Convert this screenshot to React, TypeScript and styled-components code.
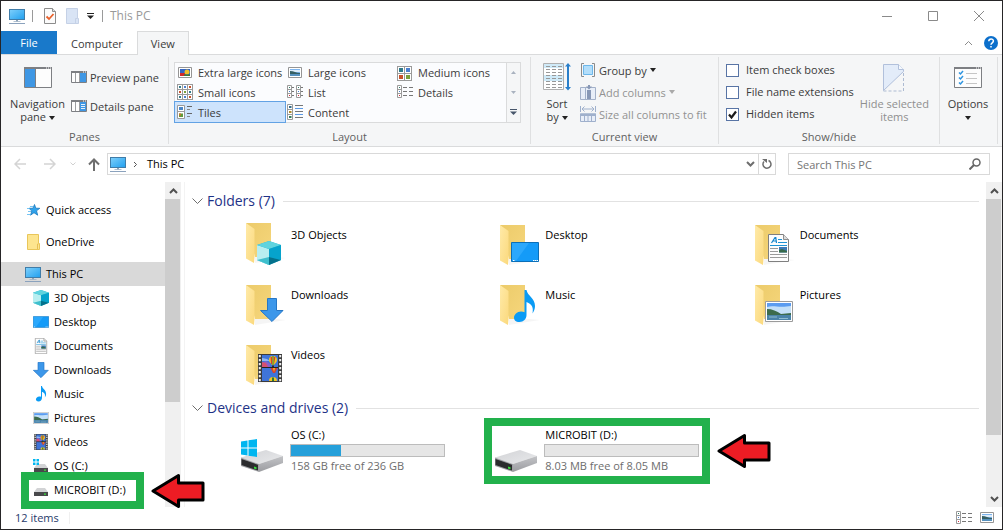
import React from "react";
import styled, { createGlobalStyle, css } from "styled-components";

const GlobalStyle = createGlobalStyle`
  *, *::before, *::after { box-sizing: border-box; }
  body { margin: 0; background: #fff; }
  body, button, input { font-family: "Open Sans", "Noto Sans", sans-serif; font-size: 11px; }
  button { border: 0; padding: 0; margin: 0; background: none; color: inherit; }
  svg { display: block; flex: none; }
  ul { list-style: none; margin: 0; padding: 0; }
  a { color: inherit; text-decoration: none; }
`;

/* ---------- window frame ---------- */

const Window = styled.div`
  display: flex;
  flex-direction: column;
  min-height: 100vh;
  border: 1px solid #262527;
  background: #fff;
  color: #000;
  line-height: 18px;
`;

const TitleBar = styled.header`
  display: flex;
  align-items: center;
  height: 30px;
  padding-left: 8px;
`;

const QuickTools = styled.div`
  display: flex;
  align-items: center;
  flex: 1;
`;

const Separator = styled.span<{ $gap: string }>`
  width: 1px;
  height: 12px;
  margin: ${(p) => p.$gap};
  background: #9a9a9a;
`;

const ToolButton = styled.button<{ $gap?: number }>`
  display: flex;
  margin-left: ${(p) => p.$gap ?? 0}px;
`;

const Title = styled.h1`
  margin: 0;
  font-size: 12px;
  font-weight: 400;
  color: #999;
`;

const WindowButton = styled.button`
  display: grid;
  place-items: center;
  width: 46px;
  height: 29px;
  color: #8a8a8a;
`;

/* ---------- tabs ---------- */

const TabBar = styled.nav`
  display: flex;
  height: 24px;
  border-bottom: 1px solid #dadbdc;
`;

const Tab = styled.button<{ $kind?: "file" | "active" }>`
  height: 24px;
  padding: 0 13px;
  border: 1px solid transparent;
  border-bottom: 0;
  color: #3b3b3b;
  ${(p) =>
    p.$kind === "file" &&
    css`
      width: 56px;
      height: 23px;
      border: 0;
      background: #1979ca;
      color: #fff;
    `}
  ${(p) =>
    p.$kind === "active" &&
    css`
      border-color: #dadbdc;
      background: #f5f6f7;
    `}
`;

const TabTools = styled.div`
  display: flex;
  align-items: center;
  gap: 11px;
  margin-left: auto;
  padding-right: 4px;
`;

/* ---------- ribbon ---------- */

const Ribbon = styled.section`
  display: flex;
  padding: 2px 0;
  border-bottom: 1px solid #dadbdc;
  background: #f5f6f7;
  color: #3b3b3b;
`;

const Group = styled.div<{ $width: number }>`
  display: flex;
  flex-direction: column;
  width: ${(p) => p.$width}px;
  height: 87px;
  border-right: 1px solid #dfe0e1;
`;

const GroupBody = styled.div`
  display: flex;
  flex: 1;
  padding: 2px 4px 0 5px;
`;

const GroupLabel = styled.div`
  line-height: 14px;
  text-align: center;
  color: #5f5f5f;
`;

const BigButton = styled.button<{ $width: number; $pad: number; $off?: boolean }>`
  display: flex;
  flex-direction: column;
  align-items: center;
  justify-content: space-between;
  width: ${(p) => p.$width}px;
  height: 64px;
  padding-top: ${(p) => p.$pad}px;
  line-height: 13px;
  color: ${(p) => (p.$off ? "#8f8f8f" : "inherit")};
`;

const BigText = styled.span`
  display: block;
  min-height: 26px;
  white-space: nowrap;
`;

const Stack = styled.div<{ $gap?: number; $top?: number }>`
  display: flex;
  flex-direction: column;
  gap: ${(p) => p.$gap ?? 0}px;
  padding-top: ${(p) => p.$top ?? 0}px;
`;

const SmallButton = styled.button<{ $off?: boolean }>`
  display: flex;
  align-items: center;
  gap: 3px;
  height: 22px;
  padding: 0 2px;
  white-space: nowrap;
  color: ${(p) => (p.$off ? "#929292" : "inherit")};
`;

const Gallery = styled.div`
  display: flex;
  width: 347px;
  height: 61px;
  margin-top: 3px;
  border: 1px solid #dadbdc;
  background: #fbfcfe;
`;

const GalleryGrid = styled.div`
  display: grid;
  grid-template-columns: 110px 110px 1fr;
  grid-template-rows: 19px 20px 20px;
  flex: 1;
`;

const GalleryItem = styled.button<{ $selected?: boolean }>`
  display: flex;
  align-items: center;
  gap: 5px;
  padding-left: 2px;
  white-space: nowrap;
  ${(p) =>
    p.$selected &&
    css`
      background: #cde3fc;
      outline: 1px solid #62a2e4;
      outline-offset: 0;
    `}
`;

const GallerySpin = styled.div`
  display: grid;
  grid-template-rows: 19px 20px 20px;
  width: 14px;
  border-left: 1px solid #dadbdc;
  background: #f5f6f7;
`;

const SpinButton = styled.button`
  display: grid;
  place-items: center;
`;

const CheckRow = styled.label`
  display: flex;
  align-items: center;
  gap: 7px;
  height: 22px;
  padding-left: 2px;
  white-space: nowrap;
`;

const CheckHolder = styled.span`
  position: relative;
  display: flex;
  svg { position: absolute; left: 0; top: 0; pointer-events: none; }
  input:not(:checked) + svg { display: none; }
`;

const Check = styled.input`
  appearance: none;
  width: 13px;
  height: 13px;
  margin: 0;
  border: 1px solid #5874a5;
  background: #fff;
`;

/* ---------- address bar ---------- */

const AddressBar = styled.div`
  display: flex;
  align-items: center;
  padding: 6px 12px 7px 13px;
`;

const NavButtons = styled.div`
  display: flex;
  align-items: center;
  width: 93px;
`;

const AddressBox = styled.div`
  display: flex;
  align-items: center;
  flex: 1;
  height: 22px;
  padding-left: 2px;
  border: 1px solid #d9d9d9;
`;

const Crumb = styled.a`
  flex: 1;
  padding-left: 9px;
`;

const AddressButton = styled.button<{ $divided?: boolean }>`
  display: grid;
  place-items: center;
  width: ${(p) => (p.$divided ? 17 : 15)}px;
  height: 20px;
  border-left: ${(p) => (p.$divided ? "1px solid #d9d9d9" : "0")};
`;

const SearchBox = styled.label`
  display: flex;
  align-items: center;
  width: 202px;
  height: 22px;
  margin-left: 12px;
  padding: 0 8px;
  border: 1px solid #d9d9d9;
`;

const SearchInput = styled.input`
  flex: 1;
  min-width: 0;
  height: 20px;
  padding: 0;
  border: 0;
  outline: 0;
  &::placeholder { color: #757575; opacity: 1; }
`;

/* ---------- body ---------- */

const Body = styled.div`
  display: flex;
  flex: 1;
`;

const Sidebar = styled.nav`
  width: 164px;
  padding: 16px 0 4px;
`;

const NavItem = styled.li<{ $level: number; $selected?: boolean }>`
  position: relative;
  margin-bottom: ${(p) => (p.$level === 0 && !p.$selected ? 8 : 0)}px;
  padding-left: ${(p) => (p.$level ? 32 : 24)}px;
  background: ${(p) => (p.$selected ? "#d9d9d9" : "transparent")};
`;

const NavLink = styled.a`
  display: flex;
  align-items: center;
  gap: 5px;
  height: 24px;
  white-space: nowrap;
`;

const ScrollTrack = styled.div`
  display: flex;
  flex-direction: column;
  width: 16px;
  background: #f0f0f0;
`;

const ScrollButton = styled.button`
  display: grid;
  place-items: center;
  height: 17px;
`;

const ScrollThumb = styled.div<{ $share: number }>`
  flex: ${(p) => p.$share};
  margin-right: 1px;
  background: #cdcdcd;
`;

const ScrollRest = styled.div<{ $share: number }>`
  flex: ${(p) => p.$share};
`;

const Main = styled.main`
  flex: 1;
  min-width: 0;
  margin-left: 3px;
  padding: 8px 0 0 7px;
  border-left: 1px solid #f3f3f3;
`;

const SectionHead = styled.h2`
  display: flex;
  align-items: center;
  gap: 4px;
  height: 22px;
  margin: 0 7px 0 0;
  font-size: 14px;
  font-weight: 400;
  color: #1e3287;
  white-space: nowrap;
  &::after {
    content: "";
    flex: 1;
    height: 1px;
    margin-left: 4px;
    background: #e2e2e2;
  }
`;

const Tiles = styled.ul`
  display: grid;
  grid-template-columns: repeat(auto-fill, minmax(240px, 1fr));
  grid-auto-rows: 60px;
  column-gap: 14px;
  margin: 3px 0 2px 45px;
`;

const Tile = styled.li`
  position: relative;
  display: flex;
  gap: 2px;
  padding: 6px 0 0 3px;
`;

const TileName = styled.a`
  padding: 5px 0 0 1px;
`;

const DriveInfo = styled.div`
  display: flex;
  flex-direction: column;
  width: 155px;
  margin-top: -2px;
`;

const DriveName = styled.a`
  padding-left: 1px;
`;

const Meter = styled.div`
  height: 13px;
  border: 1px solid #bcbcbc;
  background: #e6e6e6;
`;

const MeterFill = styled.div`
  height: 11px;
  background: #26a0da;
`;

const DriveSpace = styled.span`
  padding-left: 1px;
  color: #6d6d6d;
  white-space: nowrap;
`;

/* Tutorial callout: green frame with a red arrow pointing at it */
const Callout = styled.div<{ $left: number; $top: number; $width: number; $height: number }>`
  position: absolute;
  z-index: 2;
  left: ${(p) => p.$left}px;
  top: ${(p) => p.$top}px;
  width: ${(p) => p.$width}px;
  height: ${(p) => p.$height}px;
  border: 8px solid #22b14c;
  pointer-events: none;
  svg { position: absolute; left: 100%; top: 50%; margin: -18px 0 0 15px; }
`;

/* ---------- status bar ---------- */

const StatusBar = styled.footer`
  display: flex;
  align-items: center;
  gap: 7px;
  height: 22px;
  padding: 0 7px 0 14px;
  color: #1f3a6a;
`;

const StatusCount = styled.span`
  padding-right: 10px;
  margin-right: auto;
  border-right: 1px solid #f0f0f0;
  line-height: 12px;
`;

/* ---------- icons ---------- */

const CaretMark = styled.svg`
  display: inline-block;
  vertical-align: middle;
`;

const Caret = ({ color = "#222" }: { color?: string }) => (
  <CaretMark width="6" height="4" viewBox="0 0 6 4">
    <path d="M0 0h6L3 4z" fill={color} />
  </CaretMark>
);

const PcIcon = () => (
  <svg width="16" height="16" viewBox="0 0 16 16">
    <defs>
      <linearGradient id="pc" x1="0" y1="0" x2="1" y2="1">
        <stop offset="0" stopColor="#7fd0fb" /><stop offset="1" stopColor="#1f9fef" />
      </linearGradient>
    </defs>
    <rect x=".5" y="1.5" width="15" height="10" fill="url(#pc)" stroke="#3f7ca8" />
    <path d="M7 12h2v1.5h-2z" fill="#8fa3b8" /><path d="M4.5 13h7v.8h-7z" fill="#9db1c6" />
    <path d="M0 15.5h16" stroke="#8ba2bd" />
  </svg>
);

const PropertiesIcon = () => (
  <svg width="12" height="16" viewBox="0 0 12 16">
    <path d="M.5.5h8l3 3v12H.5z" fill="#fbfbfb" stroke="#8c8c8c" />
    <path d="M8.5.5v3h3" fill="#ddd" stroke="#8c8c8c" />
    <path d="M2.5 8.5l2.500 2.500L9.500 6" fill="none" stroke="#e8612c" strokeWidth="1.8" />
  </svg>
);

const NewFolderIcon = () => (
  <svg width="13" height="16" viewBox="0 0 13 16">
    <path d="M.5.5h11v10h1v5H.5z" fill="#d9e4f5" stroke="#c5d1e6" />
    <path d="M9.5 15v-4.5h2" fill="none" stroke="#c5d1e6" />
  </svg>
);

const FolderIcon = () => (
  <svg width="16" height="16" viewBox="0 0 16 16">
    <path d="M2.5.5h11v9h1v6h-12z" fill="#fde58f" stroke="#e9c65a" />
    <path d="M12.5 15v-5h1" fill="none" stroke="#e6bf55" />
  </svg>
);

const StarIcon = () => (
  <svg width="16" height="16" viewBox="0 0 16 16">
    <path d="M9.5 2.500l1.300 3.700 4 .1-3.300 2.500 1.200 4.400-3.700-2.500-3.500 2.500 1.300-4.200L4 6.300l4-.1z" fill="#2ea3ec" stroke="#1c78bd" strokeWidth=".8" />
    <path d="M5 4.500h3M2 6.500h3M3 9.500h3M2 12.500h4" stroke="#54b5f0" strokeWidth=".8" />
  </svg>
);

const CubeShape = () => (
  <>
    <path d="M12 0l12 4v15l-12 5-12-5V4z" fill="#19b5cf" />
    <path d="M0 4l12 4v16L0 19z" fill="#b8eef0" />
    <path d="M0 4L12 0l12 4-12 4z" fill="#5fd3de" />
    <path d="M12 8l12-4v15l-12-3z" fill="#06a3cc" />
    <path d="M0 19l12-3v8z" fill="#3fbfcd" />
    <path d="M12 16l12 3-12 5z" fill="#04718c" />
  </>
);

const Balloon = ({ x, y }: { x: number; y: number }) => (
  <g transform={`translate(${x} ${y})`}>
    <path d="M-4 0a4 4 0 018 0c0 2-2 3.500-3 5h-2c-1-1.500-3-3-3-5z" fill="#f3c623" />
    <path d="M-2.500-3h1.500v7h-1zM1-3h1.500L1 4z" fill="#d6402e" /><path d="M-.5-4h1v9h-1z" fill="#2c7a3a" />
    <path d="M-1 5.500h2V7h-2z" fill="#3a2a1a" />
  </g>
);

const FilmShape = () => (
  <>
    <path d="M0 0h24v28H0z" fill="#3c3c3c" />
    <path d="M1.800 1v27M22.200 1v27" stroke="#eee" strokeWidth="2" strokeDasharray="2.2 1.8" />
    <path d="M4 1h16v12H4zM4 14h16v13H4z" fill="#3f74d8" />
    <path d="M4 9l4-2 4 3v3H4z" fill="#8a5fc8" /><path d="M4 8l4 1 2 4H4z" fill="#d65070" /><path d="M4 4l5 1 3 2H4z" fill="#8fb8f2" />
    <Balloon x={15} y={6} />
    <path d="M12.500 14h7l-2.500 5h-2z" fill="#d6402e" /><path d="M15 14h2l-1 4z" fill="#f3c623" />
    <path d="M11 27a4 4 0 018 0z" fill="#f3c623" /><path d="M14 23.500h2V27h-2z" fill="#2c7a3a" />
    <path d="M4 13.500h16" stroke="#222" />
  </>
);

const PhotoShape = () => (
  <>
    <path d="M.5.5h27v20H.5z" fill="#fff" stroke="#9b9b9b" />
    <path d="M2 2h24v17H2z" fill="#5b9cf0" />
    <path d="M2 6c6-2 12 1 24-1v8H2z" fill="#c4e0f8" />
    <path d="M2 8c5 0 10 2 14 5l10-1v2H2z" fill="#3c6b4c" />
    <path d="M2 14h24v5H2z" fill="#4a83a8" />
    <path d="M4 16h8M14 17.5h9" stroke="#8dbbd0" />
  </>
);

const NoteShape = () => (
  <path d="M10.5 0h2c1 6 8.500 8 8.500 16 0 3-1 5-2.500 7.500 1-6 0-9-6-11.500v13c0 4-3 7-7 7S0 30 0 27.500s3-6 7-6c1.500 0 2.700.3 3.500.8z" fill="#0a9bf5" />
);

const DownShape = () => <path d="M7.500.5h9v12h6.500L12 23.500.5 12.500h7z" fill="#3c97ea" stroke="#2677c6" />;

const DocShape = () => (
  <>
    <path d="M.5.5h15l5 5v22H.5z" fill="#fdfdfd" stroke="#7f7f7f" />
    <path d="M15.5.5v5h5" fill="#dcdcdc" stroke="#8f8f8f" />
    <path d="M3.500 9L7 3.500h.8L8.500 9M5 7h3.500" fill="none" stroke="#1585cc" strokeWidth="1.2" />
    <path d="M10 5.500h4M10 8.500h9M2 11.500h17" stroke="#1e93d4" />
    <path d="M2 14.500h8M2 17.500h8M2 20.500h17M2 23.500h17" stroke="#9a9a9a" />
    <path d="M11 13h8v5.500h-8z" fill="#3c78b4" /><path d="M11 16l3-1 5 2v1.500h-8z" fill="#386a4a" />
  </>
);

const DesktopShape = () => (
  <>
    <path d="M.5.5h27v19H.5z" fill="#149bf8" stroke="#0b6fb8" />
    <path d="M1 1h17L5 19H1z" fill="#3bb0ff" opacity=".6" />
    <path d="M2 18.5h1.500M22 18.5h5" stroke="#fff" strokeDasharray="1.5 .5" />
  </>
);

const Shrunk = ({ w, h, children, height = 16 }: { w: number; h: number; children: React.ReactNode; height?: number }) => (
  <svg width="16" height={height} viewBox={`0 0 ${w} ${h}`}>{children}</svg>
);

const DriveShape = () => (
  <>
    <defs>
      <linearGradient id="dtop" x1="0" y1="0" x2="1" y2="1">
        <stop offset="0" stopColor="#d2d3d6" /><stop offset="1" stopColor="#e9eaec" />
      </linearGradient>
      <linearGradient id="dside" x1="0" y1="0" x2="0" y2="1">
        <stop offset="0" stopColor="#c3c4c7" /><stop offset="1" stopColor="#9b9ca0" />
      </linearGradient>
    </defs>
    <path d="M1 29.500L26 22l17 6-24 8z" fill="url(#dtop)" />
    <path d="M19 36l24-8v7L19 44z" fill="url(#dside)" />
    <path d="M1 29.500L19 36v8L1 38z" fill="#9fa0a4" />
    <path d="M1.500 31L18 36.800v5.800L1.500 37z" fill="#2b2c2e" />
    <path d="M14 38.500l2.500.8v2l-2.500-.8z" fill="#37e03b" />
  </>
);

const WinLogo = () => <path d="M1 13.500l6.500-1v7H1zM8.500 12.300L17 11v8.500H8.500zM1 20.500h6.500v7l-6.500-1zM8.500 20.500H17V29l-8.500-1.300z" fill="#00b6f0" />;

const SmallDrive = ({ os = false }: { os?: boolean }) => (
  <svg width="16" height="16" viewBox="0 0 16 16">
    <path d="M4 6h8l3 4H1z" fill="#d2d3d5" />
    <path d="M1 10h14v4H1z" fill="#48494b" /><path d="M11 11.500h2v1.200h-2z" fill="#37e03b" />
    {os && <path d="M0 1h2.500v2.500H0zM3.500 1H6v2.500H3.500zM0 4.500h2.500V7H0zM3.500 4.500H6V7H3.500z" fill="#00b6f0" />}
  </svg>
);

const BigFolder = ({ children, lift = 0 }: { children: React.ReactNode; lift?: number }) => (
  <svg width="48" height="48" viewBox="0 0 48 48">
    <defs>
      <linearGradient id="fback" x1="0" y1="0" x2="1" y2="1">
        <stop offset="0" stopColor="#eccb6a" /><stop offset="1" stopColor="#f6d67c" />
      </linearGradient>
      <linearGradient id="ffront" x1="0" y1="0" x2="1" y2="1">
        <stop offset="0" stopColor="#ffeaa8" /><stop offset="1" stopColor="#fbd97d" />
      </linearGradient>
    </defs>
    <g transform={`translate(6 ${4 - lift})`}>
      <path d="M0 0h25v34H9z" fill="url(#fback)" />
      <path d="M9 40l31-5-10-1H9z" fill="#000" opacity=".04" />
      <path d="M0 0l8.500 6v28L8 40l-8-4.500z" fill="url(#ffront)" />
    </g>
    {children}
  </svg>
);

const PaneIcon = ({ kind }: { kind: "nav" | "preview" | "details" }) =>
  kind === "nav" ? (
    <svg width="28" height="21" viewBox="0 0 28 21">
      <path d="M.5.5h27v20H.5z" fill="#fdfdfd" stroke="#7d7f83" />
      <path d="M0 0h28v2H0z" fill="#7d7f83" /><path d="M22 1h1M24 1h1M26 1h1" stroke="#fff" />
      <path d="M1 2h10.500v18H1z" fill="#3f97e4" /><path d="M11.500 2v18" stroke="#7d7f83" />
    </svg>
  ) : (
    <svg width="16" height="13" viewBox="0 0 16 13">
      <path d="M.5.5h15v11H.5z" fill="#fdfdfd" stroke="#7d7f83" />
      <path d="M0 0h16v2H0z" fill="#7d7f83" /><path d="M12 1h1M14 1h1" stroke="#fff" />
      <path d="M4.500 2v9M8.500 2v9" stroke="#9b9da0" />
      <path d="M9 2h6v9H9z" fill="#3f97e4" />
      {kind === "details" && <path d="M10 4.500h4M10 6.500h4M10 8.500h4" stroke="#e4f1fc" />}
    </svg>
  );

const MiniPhoto = ({ tone = "sky" }: { tone?: "sky" | "flower" }) => (
  <svg width="16" height="12" viewBox="0 0 16 12">
    <path d="M1.500.5h13v10h-13z" fill="#fff" stroke="#959595" />
    {tone === "sky" ? (
      <>
        <path d="M3 2h10v7H3z" fill="#7db4ee" /><path d="M3 3h10v2H3z" fill="#dcecfa" />
        <path d="M3 4c4 0 6 2 10 2v1H3z" fill="#355f63" /><path d="M3 7h10v2H3z" fill="#5590bd" />
      </>
    ) : (
      <>
        <path d="M3 2h10v7H3z" fill="#3465c4" /><path d="M3 6h5v3H3z" fill="#d02a2a" />
        <circle cx="10" cy="5" r="2.500" fill="#eec02a" /><path d="M7 7.500h6V9H7z" fill="#3c7a35" />
      </>
    )}
  </svg>
);

const GridIcon = ({ n }: { n: 2 | 3 }) => {
  const step = n === 2 ? 7 : 5;
  const dot = n === 2 ? 4 : 2;
  const tones = ["#2f7a8a", "#4a7fd0", "#c8502a", "#7aa03a"];
  const cells = Array.from({ length: n * n }, (_, i) => [i % n, Math.floor(i / n)]);
  return (
    <svg width="16" height="16" viewBox={n === 2 ? "0 -1 16 16" : "0 0 16 16"}>
      {cells.map(([c, r], i) => (
        <g key={i}>
          <rect x={c * step + 0.5} y={r * step + 0.5} width={step} height={step} fill="#fff" stroke="#9a9a9a" />
          <rect x={c * step + 2} y={r * step + 2} width={dot} height={dot} fill={tones[(c + 2 * r) % 4]} />
        </g>
      ))}
    </svg>
  );
};

const RowsIcon = ({ kind }: { kind: "list" | "details" | "content" | "tiles" }) => {
  const column = (x: number) => (
    <>
      <path d={`M${x + 0.5} 1.5h4v12h-4zM${x} 5.5h5M${x} 9.5h5`} fill="#fff" stroke="#9a9a9a" />
      <path d={`M${x + 2} 3h1v1h-1z`} fill="#2f7a6a" /><path d={`M${x + 2} 7h1v1h-1z`} fill="#4a7fd0" /><path d={`M${x + 2} 11h1v1h-1z`} fill="#d03040" />
    </>
  );
  return (
    <svg width="16" height="16" viewBox="0 0 16 16">
      {kind === "list" && <>{column(0)}{column(9)}<path d="M5 3.500h2M5 7.500h2M5 11.500h2M14 3.500h2M14 7.500h2M14 11.500h2" stroke="#777" /></>}
      {kind === "details" && <>{column(0)}<path d="M6 3.500h4M6 7.500h4M6 11.500h4M12 3.500h4M12 7.500h4M12 11.500h4" stroke="#777" /></>}
      {kind === "content" && (
        <>
          <path d="M.5.5h5v15h-5zM0 5.500h6M0 10.500h6" fill="#fff" stroke="#9a9a9a" />
          <path d="M2 2h2.500v2H2z" fill="#2f6a8a" /><path d="M2 7h2.500v2H2z" fill="#b08a2a" /><path d="M2 12h2.500v2H2z" fill="#2f7a5a" />
          <path d="M8 1.500h8M8 7.500h8M8 13.500h8" stroke="#777" /><path d="M8 4.500h8M8 10.500h8" stroke="#5a9ae6" />
        </>
      )}
      {kind === "tiles" && (
        <>
          <path d="M.5 1.500h7v13h-7zM0 7.500h8" fill="#fff" stroke="#9a9a9a" />
          <path d="M2 3h4v3H2z" fill="#4a86c8" /><path d="M2 9.500h4v3.500H2z" fill="#5f9a3a" /><path d="M2 9.500h2v2H2z" fill="#c8742a" />
          <path d="M10 2.500h5M10 9.500h5" stroke="#666" /><path d="M10 5.500h3M10 12.500h3" stroke="#888" />
        </>
      )}
    </svg>
  );
};

const SortIcon = () => (
  <svg width="28" height="28" viewBox="0 0 28 28">
    <path d="M.5.5h20v26H.5z" fill="#fff" stroke="#b0b0b0" />
    <path d="M1 1h19v4H1zM1 12h19v6H1z" fill="#cfeaf8" />
    <path d="M3 3.500h16M3 6.500h16M3 9.500h16M3 12.500h16M3 15.500h16M3 18.500h16M3 21.500h16M3 24.500h16" stroke="#999" strokeDasharray="4 2" />
    <path d="M25 2v23" stroke="#2a7fca" strokeWidth="2" /><path d="M22 3.500L25 0l3 3.500zM22 24l3 3.500 3-3.500z" fill="#2a7fca" />
  </svg>
);

const GroupByIcon = () => (
  <svg width="16" height="14" viewBox="0 0 16 14">
    <path d="M4 .5H1.500v13H4M12 .5h2.500v13H12" fill="none" stroke="#8a8a8a" />
    <path d="M3.500 2.500h9v9h-9z" fill="#b3defa" stroke="#6db7ea" />
  </svg>
);

const AddColumnsIcon = () => (
  <svg width="16" height="15" viewBox="0 0 16 15">
    <path d="M.5 2.500h15v12H.5zM5.500 2v12" fill="#e8eef8" stroke="#a3b1c9" />
    <path d="M7 5h4v9H7z" fill="#8898b6" /><path d="M8 0h2v1.500h2L9 4.500 6 1.500h2z" fill="#8898b6" />
  </svg>
);

const FitColumnsIcon = () => (
  <svg width="16" height="16" viewBox="0 0 16 16">
    <path d="M.5 0v6M15.500 0v6M2 3h12M4.500 .5L2 3l2.500 2.500M11.500 .5L14 3l-2.500 2.500" fill="none" stroke="#9fb0cc" />
    <path d="M.5 8h15v7.500H.5z" fill="#e8eef8" stroke="#9fb0cc" /><path d="M0 7.500h16v2.500H0z" fill="#9fb0cc" />
    <path d="M4.500 10v5M8 10v5M11.500 10v5" stroke="#9fb0cc" />
  </svg>
);

const HideIcon = () => (
  <svg width="22" height="28" viewBox="0 0 22 28">
    <path d="M.5.5h15l5 5v2L.5 26.500z" fill="#e3ecf9" stroke="#b1c0db" />
    <path d="M15.500.5v5h5" fill="#f6f9fe" stroke="#b1c0db" />
    <path d="M20.500 9v18H.5" fill="none" stroke="#adbbd2" strokeDasharray="3 2" />
  </svg>
);

const OptionsIcon = () => (
  <svg width="28" height="21" viewBox="0 0 28 21">
    <path d="M.5.5h27v20H.5z" fill="#fdfdfd" stroke="#7d7f83" />
    <path d="M0 0h28v2H0z" fill="#7d7f83" /><path d="M22 1h1M24 1h1M26 1h1" stroke="#fff" />
    <path d="M5 5.500l1.500 1.500L9 4M5 10.500l1.500 1.500L9 9M5 15.500l1.500 1.500L9 14" fill="none" stroke="#2f95e0" strokeWidth="1.5" />
    <path d="M12 6.500h11M12 11.500h11M12 16.500h11" stroke="#c6c6c6" />
  </svg>
);

const Chevron = ({ d, color = "#505050", w = 9, h = 6, sw = 2 }: { d: string; color?: string; w?: number; h?: number; sw?: number }) => (
  <svg width={w} height={h} viewBox={`0 0 ${w} ${h}`}><path d={d} fill="none" stroke={color} strokeWidth={sw} /></svg>
);

const RedArrow = () => (
  <svg width="54" height="36" viewBox="0 0 54 36">
    <path d="M2 18L27.500 2.500v7.500h24.500v17h-24.500v6.500z" fill="#ed1c24" stroke="#000" strokeWidth="3" strokeLinejoin="round" />
  </svg>
);

/* ---------- data ---------- */

const layouts: { name: string; icon: React.ReactNode; selected?: boolean }[] = [
  { name: "Extra large icons", icon: <MiniPhoto tone="flower" /> },
  { name: "Large icons", icon: <MiniPhoto /> },
  { name: "Medium icons", icon: <GridIcon n={2} /> },
  { name: "Small icons", icon: <GridIcon n={3} /> },
  { name: "List", icon: <RowsIcon kind="list" /> },
  { name: "Details", icon: <RowsIcon kind="details" /> },
  { name: "Tiles", icon: <RowsIcon kind="tiles" />, selected: true },
  { name: "Content", icon: <RowsIcon kind="content" /> },
];

const places: { name: string; icon: React.ReactNode; level: number; selected?: boolean; marked?: boolean }[] = [
  { name: "Quick access", icon: <StarIcon />, level: 0 },
  { name: "OneDrive", icon: <FolderIcon />, level: 0 },
  { name: "This PC", icon: <PcIcon />, level: 0, selected: true },
  { name: "3D Objects", icon: <Shrunk w={24} h={24}><CubeShape /></Shrunk>, level: 1 },
  { name: "Desktop", icon: <Shrunk w={28} h={20} height={12}><DesktopShape /></Shrunk>, level: 1 },
  { name: "Documents", icon: <Shrunk w={21} h={28}><DocShape /></Shrunk>, level: 1 },
  { name: "Downloads", icon: <Shrunk w={24} h={24}><DownShape /></Shrunk>, level: 1 },
  { name: "Music", icon: <Shrunk w={21} h={33}><NoteShape /></Shrunk>, level: 1 },
  { name: "Pictures", icon: <Shrunk w={28} h={21} height={12}><PhotoShape /></Shrunk>, level: 1 },
  { name: "Videos", icon: <Shrunk w={24} h={28}><FilmShape /></Shrunk>, level: 1 },
  { name: "OS (C:)", icon: <SmallDrive os />, level: 1 },
  { name: "MICROBIT (D:)", icon: <SmallDrive />, level: 1, marked: true },
];

const folders = [
  { name: "3D Objects", icon: <BigFolder lift={2}><g transform="translate(17 20)"><CubeShape /></g></BigFolder> },
  { name: "Desktop", icon: <BigFolder><g transform="translate(17 21)"><DesktopShape /></g></BigFolder> },
  { name: "Documents", icon: <BigFolder><g transform="translate(19 13)"><DocShape /></g></BigFolder> },
  { name: "Downloads", icon: <BigFolder><g transform="translate(20 17)"><DownShape /></g></BigFolder> },
  { name: "Music", icon: <BigFolder><g transform="translate(20 9)"><NoteShape /></g></BigFolder> },
  { name: "Pictures", icon: <BigFolder><g transform="translate(16 20)"><PhotoShape /></g></BigFolder> },
  { name: "Videos", icon: <BigFolder><g transform="translate(18 13)"><FilmShape /></g></BigFolder> },
];

const drives = [
  { name: "OS (C:)", space: "158 GB free of 236 GB", used: 33, os: true, marked: false },
  { name: "MICROBIT (D:)", space: "8.03 MB free of 8.05 MB", used: 0, os: false, marked: true },
];

const options = [
  { name: "Item check boxes", on: false },
  { name: "File name extensions", on: false },
  { name: "Hidden items", on: true },
];

const UP = "M1 5l3.500-3.500L8 5";
const DOWN = "M1 1l3.500 3.500L8 1";

const Scrollbar = ({ thumb, rest, down = true }: { thumb: number; rest: number; down?: boolean }) => (
  <ScrollTrack>
    <ScrollButton aria-label="Scroll up"><Chevron d={UP} /></ScrollButton>
    <ScrollThumb $share={thumb} />
    <ScrollRest $share={rest} />
    {down && <ScrollButton aria-label="Scroll down"><Chevron d={DOWN} /></ScrollButton>}
  </ScrollTrack>
);

export default function App() {
  return (
    <>
      <GlobalStyle />
      <Window>
        <TitleBar>
          <QuickTools>
            <PcIcon />
            <Separator $gap="0 11px 0 7px" />
            <ToolButton aria-label="Properties"><PropertiesIcon /></ToolButton>
            <ToolButton aria-label="New folder" $gap={10}><NewFolderIcon /></ToolButton>
            <ToolButton aria-label="Customize toolbar" $gap={8}>
              <svg width="7" height="6" viewBox="0 0 7 6"><path d="M0 .5h7" stroke="#222" /><path d="M0 2.500h7L3.500 6z" fill="#222" /></svg>
            </ToolButton>
            <Separator $gap="0 7px 0 8px" />
            <Title>This PC</Title>
          </QuickTools>
          <WindowButton aria-label="Minimize"><svg width="10" height="10"><path d="M0 5.500h10" stroke="currentColor" /></svg></WindowButton>
          <WindowButton aria-label="Maximize"><svg width="10" height="10"><path d="M.5.5h9v9h-9z" fill="none" stroke="currentColor" /></svg></WindowButton>
          <WindowButton aria-label="Close"><svg width="10" height="10"><path d="M0 0l10 10M10 0L0 10" stroke="currentColor" /></svg></WindowButton>
        </TitleBar>

        <TabBar>
          <Tab $kind="file">File</Tab>
          <Tab>Computer</Tab>
          <Tab $kind="active">View</Tab>
          <TabTools>
            <button aria-label="Collapse ribbon"><Chevron d={UP} color="#8a8a8a" sw={1} /></button>
            <button aria-label="Help">
              <svg width="14" height="14" viewBox="0 0 14 14">
                <circle cx="7" cy="7" r="7" fill="#0c6fcb" />
                <path d="M4.800 5.300c0-3 4.600-3 4.600-.2C9.400 6.900 7 6.800 7 8.700M7 10v1.500" fill="none" stroke="#fff" strokeWidth="1.5" />
              </svg>
            </button>
          </TabTools>
        </TabBar>

        <Ribbon>
          <Group $width={168}>
            <GroupBody>
              <BigButton $width={63} $pad={8}>
                <PaneIcon kind="nav" />
                <BigText>Navigation<br />pane <Caret /></BigText>
              </BigButton>
              <Stack $gap={7} $top={7}>
                <SmallButton><PaneIcon kind="preview" />Preview pane</SmallButton>
                <SmallButton><PaneIcon kind="details" />Details pane</SmallButton>
              </Stack>
            </GroupBody>
            <GroupLabel>Panes</GroupLabel>
          </Group>

          <Group $width={362}>
            <GroupBody>
              <Gallery>
                <GalleryGrid>
                  {layouts.map((l) => (
                    <GalleryItem key={l.name} $selected={l.selected}>{l.icon}{l.name}</GalleryItem>
                  ))}
                </GalleryGrid>
                <GallerySpin>
                  <SpinButton aria-label="Previous layouts"><svg width="5" height="3"><path d="M0 3h5L2.500 0z" fill="#a9b2bf" /></svg></SpinButton>
                  <SpinButton aria-label="Next layouts"><svg width="5" height="3"><path d="M0 0h5L2.500 3z" fill="#a9b2bf" /></svg></SpinButton>
                  <SpinButton aria-label="All layouts"><svg width="7" height="6"><path d="M0 .5h7" stroke="#47566b" /><path d="M0 2.500h7L3.500 6z" fill="#47566b" /></svg></SpinButton>
                </GallerySpin>
              </Gallery>
            </GroupBody>
            <GroupLabel>Layout</GroupLabel>
          </Group>

          <Group $width={188}>
            <GroupBody>
              <BigButton $width={42} $pad={4}>
                <SortIcon />
                <BigText>Sort<br />by <Caret /></BigText>
              </BigButton>
              <Stack>
                <SmallButton><GroupByIcon />Group by <Caret /></SmallButton>
                <SmallButton $off><AddColumnsIcon />Add columns <Caret color="#a9a9a9" /></SmallButton>
                <SmallButton $off><FitColumnsIcon />Size all columns to fit</SmallButton>
              </Stack>
            </GroupBody>
            <GroupLabel>Current view</GroupLabel>
          </Group>

          <Group $width={221}>
            <GroupBody>
              <Stack>
                {options.map((o) => (
                  <CheckRow key={o.name}>
                    <CheckHolder>
                      <Check type="checkbox" defaultChecked={o.on} />
                      <svg width="13" height="13" viewBox="0 0 13 13"><path d="M3 6.500l2.500 3L10 3.500" fill="none" stroke="#1b1b1b" strokeWidth="2.2" /></svg>
                    </CheckHolder>
                    {o.name}
                  </CheckRow>
                ))}
              </Stack>
              <BigButton $width={82} $pad={5} $off>
                <HideIcon />
                <BigText>Hide selected<br />items</BigText>
              </BigButton>
            </GroupBody>
            <GroupLabel>Show/hide</GroupLabel>
          </Group>

          <Group $width={58}>
            <GroupBody>
              <BigButton $width={46} $pad={8}>
                <OptionsIcon />
                <BigText>Options<br /><Caret /></BigText>
              </BigButton>
            </GroupBody>
          </Group>
        </Ribbon>

        <AddressBar>
          <NavButtons>
            <ToolButton aria-label="Back"><svg width="12" height="12"><path d="M12 6H1M6 1L1 6l5 5" fill="none" stroke="#d4d4d4" strokeWidth="1.5" /></svg></ToolButton>
            <ToolButton aria-label="Forward" $gap={18}><svg width="12" height="12"><path d="M0 6h11M6 1l5 5-5 5" fill="none" stroke="#d4d4d4" strokeWidth="1.5" /></svg></ToolButton>
            <ToolButton aria-label="Recent locations" $gap={14}><Chevron d="M.5.5L3 3 5.500.5" w={6} h={4} color="#d0d0d0" sw={1} /></ToolButton>
            <ToolButton aria-label="Up" $gap={12}><svg width="12" height="13"><path d="M6 13V1.500M1 6.500l5-5 5 5" fill="none" stroke="#6e6e6e" strokeWidth="2" /></svg></ToolButton>
          </NavButtons>
          <AddressBox>
            <PcIcon />
            <ToolButton aria-label="Show locations" $gap={7}><Chevron d="M1 1l2.500 2.500L1 6" w={5} h={7} color="#555" sw={1} /></ToolButton>
            <Crumb href="#">This PC</Crumb>
            <AddressButton aria-label="Previous locations"><Chevron d={DOWN} color="#6e6e6e" /></AddressButton>
            <AddressButton aria-label="Refresh" $divided>
              <svg width="10" height="12" viewBox="0 0 10 12"><path d="M6.500 2.500A4 4 0 112 3.500" fill="none" stroke="#6e6e6e" strokeWidth="1.5" /><path d="M0 1h5v4z" fill="#6e6e6e" /></svg>
            </AddressButton>
          </AddressBox>
          <SearchBox>
            <SearchInput type="text" placeholder="Search This PC" aria-label="Search This PC" />
            <svg width="12" height="12" viewBox="0 0 12 12"><circle cx="7.500" cy="4.500" r="3.500" fill="none" stroke="#666" strokeWidth="1.5" /><path d="M5 7L.5 11.500" stroke="#666" strokeWidth="2" /></svg>
          </SearchBox>
        </AddressBar>

        <Body>
          <Sidebar>
            <ul>
              {places.map((p) => (
                <NavItem key={p.name} $level={p.level} $selected={p.selected}>
                  <NavLink href="#">{p.icon}{p.name}</NavLink>
                  {p.marked && <Callout $left={20} $top={-6} $width={123} $height={37}><RedArrow /></Callout>}
                </NavItem>
              ))}
            </ul>
          </Sidebar>
          <Scrollbar thumb={202} rest={105} down={false} />
          <Main>
            <SectionHead>
              <Chevron d="M.5.5l5 5 5-5" w={11} h={7} sw={1} color="#6d6d6d" />Folders (7)
            </SectionHead>
            <Tiles>
              {folders.map((f) => (
                <Tile key={f.name}>{f.icon}<TileName href="#">{f.name}</TileName></Tile>
              ))}
            </Tiles>
            <SectionHead>
              <Chevron d="M.5.5l5 5 5-5" w={11} h={7} sw={1} color="#6d6d6d" />Devices and drives (2)
            </SectionHead>
            <Tiles>
              {drives.map((d) => (
                <Tile key={d.name}>
                  <svg width="48" height="48" viewBox="0 0 48 48"><DriveShape />{d.os && <WinLogo />}</svg>
                  <DriveInfo>
                    <DriveName href="#">{d.name}</DriveName>
                    <Meter role="meter" aria-label={d.name} aria-valuenow={d.used} aria-valuemin={0} aria-valuemax={100}>
                      <MeterFill style={{ width: `${d.used}%` }} />
                    </Meter>
                    <DriveSpace>{d.space}</DriveSpace>
                  </DriveInfo>
                  {d.marked && <Callout $left={-7} $top={-4} $width={226} $height={66}><RedArrow /></Callout>}
                </Tile>
              ))}
            </Tiles>
          </Main>
          <Scrollbar thumb={236} rest={55} />
        </Body>

        <StatusBar>
          <StatusCount>12 items</StatusCount>
          <button aria-label="Details view"><RowsIcon kind="details" /></button>
          <button aria-label="Tiles view"><MiniPhoto /></button>
        </StatusBar>
      </Window>
    </>
  );
}
